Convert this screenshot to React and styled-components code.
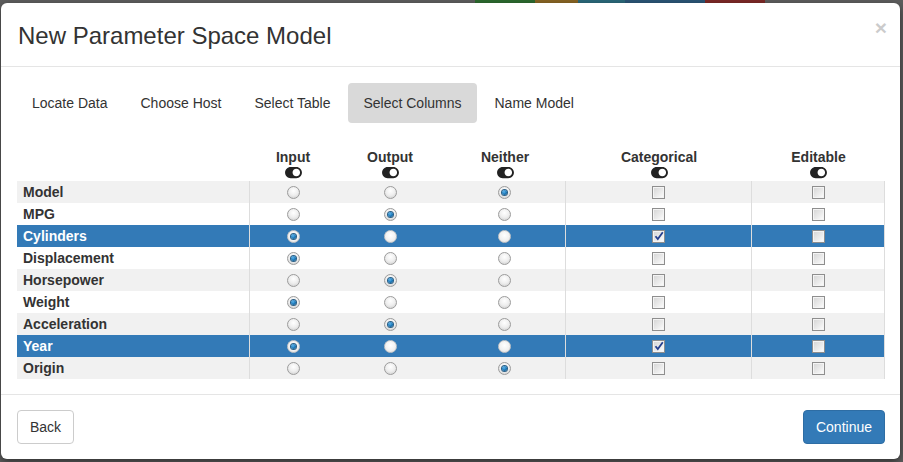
import React from "react";
import styled, { createGlobalStyle } from "styled-components";
import { FaToggleOn } from "react-icons/fa";

const GlobalStyle = createGlobalStyle`
  html, body {
    margin: 0;
    padding: 0;
    background: #5e5e5e;
    font-family: "Liberation Sans", Arial, sans-serif;
    color: #333;
    overflow: hidden;
  }
`;

const Backdrop = styled.div`
  width: 903px;
  height: 462px;
  display: flex;
  flex-direction: column;
`;

const NavStrip = styled.div`
  height: 3px;
  display: flex;
  padding-left: 475px;
`;

const NavChip = styled.div`
  width: ${(p) => p.w}px;
  background: ${(p) => p.c};
`;

const Modal = styled.div`
  margin-left: 1px;
  width: 899px;
  height: 456px;
  background: #fff;
  border-radius: 6px;
  box-shadow: 0 3px 9px rgba(0, 0, 0, 0.5);
  display: flex;
  flex-direction: column;
`;

const Header = styled.div`
  height: 63px;
  border-bottom: 1px solid #e5e5e5;
  display: flex;
  align-items: center;
  justify-content: space-between;
  padding: 0 13px 0 17px;
`;

const Title = styled.h4`
  margin: 0;
  font-size: 24px;
  font-weight: normal;
  color: #333;
  padding-top: 3px;
`;

const Close = styled.span`
  font-size: 21px;
  font-weight: bold;
  color: #000;
  opacity: 0.2;
  margin-top: -14px;
`;

const Body = styled.div`
  padding: 16px 16px 15px 16px;
`;

const Tabs = styled.div`
  display: flex;
  gap: 3px;
`;

const Tab = styled.div`
  padding: 0 15px;
  height: 40px;
  line-height: 40px;
  font-size: 14px;
  border-radius: 4px;
  background: ${(p) => (p.active ? "#d9d9d9" : "transparent")};
  color: #333;
`;

const Grid = styled.div`
  margin-top: 18px;
  display: grid;
  grid-template-columns: 233px 86px 108px 122px 186px 133px;
  width: 868px;
`;

const HeadCell = styled.div`
  padding: 6px 0 2px;
  display: flex;
  flex-direction: column;
  align-items: center;
  background: #fff;
`;

const HeadLabel = styled.div`
  font-size: 14px;
  font-weight: bold;
  line-height: 20px;
  color: #333;
`;

const ToggleIcon = styled(FaToggleOn)`
  display: block;
  width: 17px;
  height: 15px;
  margin: -2px 0 -1px;
  color: #222;
`;

const Cell = styled.div`
  height: 22px;
  display: flex;
  align-items: center;
  justify-content: ${(p) => (p.label ? "flex-start" : "center")};
  padding-left: ${(p) => (p.label ? "6px" : "0")};
  font-size: 14px;
  font-weight: bold;
  color: ${(p) => (p.selected ? "#fff" : "#333")};
  background: ${(p) => (p.selected ? "#337ab7" : p.striped ? "#f1f1f1" : "#fff")};
  border-right: ${(p) => (p.divider ? "1px solid #ddd" : "none")};
`;

const Radio = styled.span`
  width: 11px;
  height: 11px;
  border-radius: 50%;
  border: 1px solid ${(p) => (p.selected ? "#c8c8c8" : "#9c9c9c")};
  background: ${(p) =>
    p.selected
      ? "radial-gradient(circle at 50% 40%, #ffffff 0%, #f0f0f0 60%, #d8d8d8 100%)"
      : "radial-gradient(circle at 50% 35%, #ffffff 0%, #eeeeee 50%, #c9c9c9 100%)"};
  display: flex;
  align-items: center;
  justify-content: center;

  &::after {
    content: "";
    display: ${(p) => (p.checked ? "block" : "none")};
    width: 5px;
    height: 5px;
    border-radius: 50%;
    background: radial-gradient(circle at 40% 35%, #5fb4ea 0%, #1876b8 55%, #0b3e66 100%);
    box-shadow: 0 0 0 1px #2a5f86;
  }
`;

const Check = styled.span`
  width: 11px;
  height: 11px;
  border: 1px solid #8e8e8e;
  background: linear-gradient(135deg, #d4d4d4 0%, #ececec 60%, #ffffff 100%);
  display: flex;
  align-items: center;
  justify-content: center;
  box-shadow: inset 0 0 0 1px #f4f4f4;

  svg {
    display: block;
  }
`;

const Footer = styled.div`
  margin-top: auto;
  border-top: 1px solid #e5e5e5;
  padding: 15px 15px 15px 16px;
  display: flex;
  justify-content: space-between;
`;

const Button = styled.button`
  font-family: "Liberation Sans", Arial, sans-serif;
  font-size: 14px;
  height: 34px;
  padding: 0 12px;
  border-radius: 4px;
  border: 1px solid ${(p) => (p.primary ? "#2e6da4" : "#ccc")};
  background: ${(p) => (p.primary ? "#337ab7" : "#fff")};
  color: ${(p) => (p.primary ? "#fff" : "#333")};
`;

const columns = ["Input", "Output", "Neither", "Categorical", "Editable"];

const rows = [
  { name: "Model", role: 2 },
  { name: "MPG", role: 1 },
  { name: "Cylinders", role: 0, cat: true, selected: true },
  { name: "Displacement", role: 0 },
  { name: "Horsepower", role: 1 },
  { name: "Weight", role: 0 },
  { name: "Acceleration", role: 1 },
  { name: "Year", role: 0, cat: true, selected: true },
  { name: "Origin", role: 2 },
];

const tabs = ["Locate Data", "Choose Host", "Select Table", "Select Columns", "Name Model"];

function CheckBox({ checked }) {
  return (
    <Check>
      {checked && (
        <svg width="10" height="10" viewBox="0 0 10 10">
          <path d="M1.5 5.2 L3.8 8 L8.8 1.2" fill="none" stroke="#26408f" strokeWidth="1.8" />
        </svg>
      )}
    </Check>
  );
}

export default function App() {
  return (
    <>
      <GlobalStyle />
      <Backdrop>
        <NavStrip>
          <NavChip w={60} c="#2d6b30" />
          <NavChip w={43} c="#8a6624" />
          <NavChip w={47} c="#2c6a7c" />
          <NavChip w={80} c="#2b5677" />
          <NavChip w={60} c="#7e2a27" />
        </NavStrip>
        <Modal>
          <Header>
            <Title>New Parameter Space Model</Title>
            <Close>×</Close>
          </Header>
          <Body>
            <Tabs>
              {tabs.map((t) => (
                <Tab key={t} active={t === "Select Columns"}>
                  {t}
                </Tab>
              ))}
            </Tabs>
            <Grid>
              <HeadCell />
              {columns.map((c) => (
                <HeadCell key={c}>
                  <HeadLabel>{c}</HeadLabel>
                  <ToggleIcon />
                </HeadCell>
              ))}
              {rows.map((r, i) => {
                const striped = i % 2 === 0;
                const sel = !!r.selected;
                return (
                  <React.Fragment key={r.name}>
                    <Cell label divider selected={sel} striped={striped}>
                      {r.name}
                    </Cell>
                    {[0, 1, 2].map((k) => (
                      <Cell key={k} divider={k === 2} selected={sel} striped={striped}>
                        <Radio checked={r.role === k} selected={sel} />
                      </Cell>
                    ))}
                    <Cell divider selected={sel} striped={striped}>
                      <CheckBox checked={r.cat} />
                    </Cell>
                    <Cell divider selected={sel} striped={striped}>
                      <CheckBox />
                    </Cell>
                  </React.Fragment>
                );
              })}
            </Grid>
          </Body>
          <Footer>
            <Button>Back</Button>
            <Button primary>Continue</Button>
          </Footer>
        </Modal>
      </Backdrop>
    </>
  );
}
